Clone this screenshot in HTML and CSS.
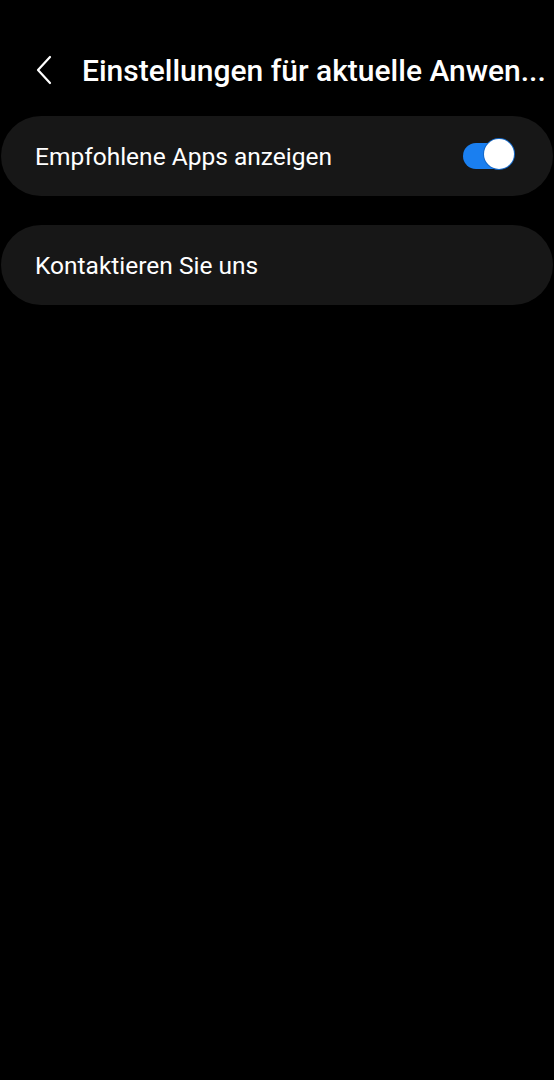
FILE: index.html
```html
<!DOCTYPE html>
<html>
<head>
    <meta charset="UTF-8">
    <meta name="viewport" content="width=device-width, initial-scale=1.0">
    <title>Einstellungen</title>
    <link rel="stylesheet" href="styles.css">
</head>
<body>

    <div class="header">
        <svg class="back" width="20" height="30" viewBox="0 0 20 30">
            <path d="M15 2 L3 15 L15 28" fill="none" stroke="#ffffff" stroke-width="2.2" stroke-linecap="round" stroke-linejoin="round"/>
        </svg>
        <div class="title">Einstellungen für aktuelle Anwen...</div>
    </div>

    <div class="card">
        <div class="label">Empfohlene Apps anzeigen</div>
        <div class="switch">
            <div class="knob"></div>
        </div>
    </div>

    <div class="card">
        <div class="label">Kontaktieren Sie uns</div>
    </div>

</body>
</html>
```

FILE: styles.css
```css
body {
    margin: 0;
    background-color: #000000;
    color: #ffffff;
    font-family: Roboto, "Noto Sans", sans-serif;
    height: 1080px;
    overflow: hidden;
}
.header {
    display: flex;
    align-items: center;
    height: 60px;
    padding: 40px 0 0 35px;
    margin-bottom: 16px;
}
.back {
    margin-right: 27px;
}
.title {
    font-size: 30px;
    font-weight: 500;
    white-space: nowrap;
}
.card {
    display: flex;
    align-items: center;
    justify-content: space-between;
    height: 80px;
    margin: 0 1px 29px 1px;
    padding: 0 41px 0 34px;
    background-color: #171717;
    border-radius: 40px;
}
.label {
    font-size: 24.5px;
}
.switch {
    position: relative;
    width: 47px;
    height: 26px;
    border-radius: 13px;
    background-color: #1a7ff0;
    margin-right: 2px;
}
.knob {
    position: absolute;
    right: -4px;
    top: -4px;
    width: 30px;
    height: 30px;
    border-radius: 50%;
    background-color: #ffffff;
    box-shadow: 0 0 0 1px #1569c8;
}
```
